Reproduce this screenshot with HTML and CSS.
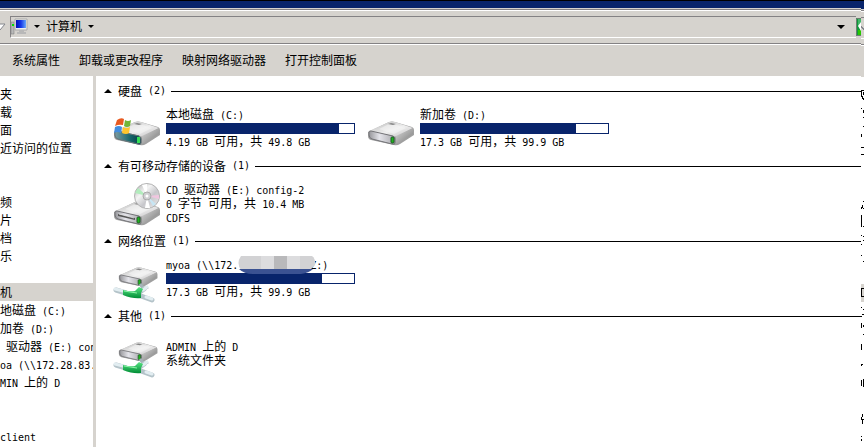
FILE: index.html
```html
<!DOCTYPE html>
<html lang="zh-CN">
<head>
<meta charset="utf-8">
<title>计算机</title>
<link rel="stylesheet" href="styles.css">
</head>
<body>
<svg class="defs" aria-hidden="true">
  <defs>
    <linearGradient id="top" x1="0" y1="0" x2="1" y2="1"><stop offset="0" stop-color="#b5b5b5"/><stop offset=".55" stop-color="#efefef"/><stop offset="1" stop-color="#c4c2c4"/></linearGradient>
    <linearGradient id="front" x1="0" y1="0" x2="1" y2="0"><stop offset="0" stop-color="#96969a"/><stop offset=".4" stop-color="#e4e4ea"/><stop offset="1" stop-color="#a8a8ac"/></linearGradient>
    <linearGradient id="side" x1="0" y1="0" x2="1" y2="1"><stop offset="0" stop-color="#dedede"/><stop offset="1" stop-color="#777"/></linearGradient>
    <linearGradient id="teal" x1="0" y1="0" x2="1" y2="0"><stop offset="0" stop-color="#7b9ba2"/><stop offset=".6" stop-color="#16656b"/><stop offset="1" stop-color="#073c42"/></linearGradient>
    <linearGradient id="disc" x1="0" y1="0" x2="1" y2="1"><stop offset="0" stop-color="#a7a7a7"/><stop offset=".35" stop-color="#f4f4f4"/><stop offset=".6" stop-color="#c7c7cb"/><stop offset="1" stop-color="#ececec"/></linearGradient>
    <linearGradient id="screen" x1="0" y1="0" x2="1" y2="0"><stop offset="0" stop-color="#0010b8"/><stop offset=".5" stop-color="#1638e8"/><stop offset="1" stop-color="#69a8fa"/></linearGradient>
    <linearGradient id="pipe" x1="0" y1="0" x2="0" y2="1"><stop offset="0" stop-color="#58e484"/><stop offset="1" stop-color="#008d35"/></linearGradient>
    <g id="drive">
      <path d="M1 11 22 1q3-1 6 0l17 5q2 1 2 3v5L33 23q-3 2-6 1L4 19q-3-1-3-4z" fill="#a0a0a0"/>
      <path d="M2 10 22 1q3-1 6 0l18 6-15 8q-2 1-5 0z" fill="url(#top)"/>
      <path d="M12 8 24 2l15 5-12 6z" fill="#f5f5f5" opacity=".55"/>
      <path d="m29 15 17-8v6L32 22l-4 1z" fill="url(#side)"/>
      <path d="M2 11q0-1 2-1l22 5q2 1 2 3v4q0 2-3 1L5 18q-3-1-3-4z" fill="url(#front)" stroke="#747478"/>
      <path d="m24 2 5 1-3 1-5-1z" fill="#858585"/>
      <rect x="24" y="16" width="3" height="6" rx="1" fill="#1db51d" stroke="#24582b"/>
    </g>
    <g id="netdrive">
      <use href="#drive" transform="translate(5 0) scale(.84 .8)"/>
      <path d="m27 17 4 5M27 24l8-4" stroke="#a3b2b8" stroke-width="3"/>
      <path d="m3 23 10 3M31 22l-7 5M28 29l11 4" stroke="#b4c3c9" stroke-width="5" stroke-linecap="round"/>
      <path d="m2 22 8 2M34 20l-4 3M33 30l6 2" stroke="#e2edf1" stroke-width="3" stroke-linecap="round"/>
      <path d="M10 23q8 2 12 1l4-4 4 2-2 4v5q-8 1-18-3z" fill="url(#pipe)"/>
      <path d="m11 24 13 2" stroke="#8bf5a7"/>
    </g>
  </defs>
</svg>

<div class="window">
  <div class="titlebar"></div>
  <header class="addressbar">
    <svg class="history" width="6" height="8" viewBox="0 0 6 8" aria-hidden="true"><path d="M-3 1h8L0 7z" fill="#fff" stroke="#84868c"/></svg>
    <div class="address">
      <svg width="17" height="18" viewBox="0 0 17 18" aria-hidden="true">
        <path d="M0 4h3v12H0z" fill="#b9b9b9" stroke="#777" stroke-width=".5"/><path d="M1 6h2v2H1z" fill="#00e000"/>
        <path d="M4 1h12v11H4z" fill="#eee" stroke="#aaa"/><path d="M5 2h10v8H5z" fill="url(#screen)"/>
        <path d="M8 12h5v2h2v2H6v-2h2z" fill="#b8b8b8"/>
      </svg>
      <button class="crumb-arrow" aria-label="位置"><i class="down"></i></button>
      <button class="crumb">计算机</button>
      <button class="crumb-arrow" aria-label="子文件夹"><i class="down"></i></button>
      <button class="crumb-arrow recent" aria-label="以前的位置"><i class="down large"></i></button>
    </div>
    <button class="refresh" aria-label="刷新"><svg width="5" height="18" viewBox="0 0 5 18"><rect width="5" height="18" fill="#10983a"/><path d="M2 1h3v7H2z" fill="#42b868"/><path d="M2 12h3v5H2z" fill="#28c800"/><path d="m2 8 3-4v9z" fill="#fff"/><path d="M.5 18V.5H5M.5 17.500H5" fill="none" stroke="#6b7d70"/></svg></button>
  </header>
  <nav class="toolbar">
    <button>系统属性</button>
    <button>卸载或更改程序</button>
    <button>映射网络驱动器</button>
    <button>打开控制面板</button>
  </nav>
  <div class="body">
    <nav class="tree">
      <div class="group">
        <a href="#">夹</a><a href="#">载</a><a href="#">面</a><a href="#">近访问的位置</a>
      </div>
      <div class="group">
        <a href="#">频</a><a href="#">片</a><a href="#">档</a><a href="#">乐</a>
      </div>
      <div class="group devices">
        <a href="#" class="selected">机</a>
        <a href="#">地磁盘<span class="m"> (C:)</span></a>
        <a href="#">加卷<span class="m"> (D:)</span></a>
        <a href="#"><span class="m"> </span>驱动器<span class="m"> (E:) con</span></a>
        <a href="#"><span class="m">oa (\\172.28.83.</span></a>
        <a href="#"><span class="m">MIN </span>上的<span class="m"> D</span></a>
      </div>
      <div class="group"><a href="#"><span class="m">client</span></a></div>
    </nav>
    <main class="content">
      <section>
        <h2><i class="up"></i>硬盘<span class="m"> (2)</span></h2>
        <div class="tiles">
          <article class="tile">
            <svg width="48" height="34" viewBox="0 0 48 34" aria-hidden="true">
              <use href="#drive" y="8"/>
              <path d="M2 19q0-1 2-1l22 5q2 1 2 3v4q0 2-3 1L5 26q-3-1-3-4z" fill="url(#teal)" stroke="#65777b"/>
              <rect x="24" y="24" width="3" height="6" fill="#35df55"/>
              <path d="M4 7q4-3 7-1l-1 6q-4-1-8 1z" fill="#e85a20"/><path d="M12 7q3 2 6 0l-1 6q-3 2-6 0z" fill="#72b637"/>
              <path d="M2 14q4-2 7 0l-1 6q-4-2-7 0z" fill="#438dde"/><path d="M10 14q3 2 7 0l-1 6q-3 2-7 0z" fill="#ffc52d"/>
            </svg>
            <div class="info"><div class="name">本地磁盘<span class="m"> (C:)</span></div><div class="bar"><div class="fill" style="width:92%"></div></div><div><span class="m">4.19 GB </span>可用，共<span class="m"> 49.8 GB</span></div></div>
          </article>
          <article class="tile">
            <svg width="48" height="34" viewBox="0 0 48 34" aria-hidden="true"><use href="#drive" y="8"/></svg>
            <div class="info"><div class="name">新加卷<span class="m"> (D:)</span></div><div class="bar"><div class="fill" style="width:83%"></div></div><div><span class="m">17.3 GB </span>可用，共<span class="m"> 99.9 GB</span></div></div>
          </article>
        </div>
      </section>
      <section>
        <h2><i class="up"></i>有可移动存储的设备<span class="m"> (1)</span></h2>
        <div class="tiles">
          <article class="tile">
            <svg width="48" height="44" viewBox="0 0 48 44" aria-hidden="true">
              <use href="#drive" y="18"/>
              <path d="m5 31 17 4v2L5 33z" fill="#555"/><path d="m6 31 15 4" stroke="#eee" stroke-width=".7"/>
              <circle cx="34" cy="13" r="12.500" fill="url(#disc)" stroke="#b3b3b3"/>
              <path d="M34 13 22 10l3-5z" fill="#b2ecbd"/><path d="m34 13 12-1v4z" fill="#f0c6df"/><path d="m34 13-5-11 5-1z" fill="#fff"/><path d="m34 13 3 12-5 0z" fill="#fff"/><path d="m34 13 9 8-3 2z" fill="#c8e6f4"/>
              <circle cx="34" cy="13" r="4" fill="#cfcfd2" stroke="#aaa"/><circle cx="34" cy="13" r="1.500" fill="#fff"/>
            </svg>
            <div class="info compact"><div><span class="m">CD </span>驱动器<span class="m"> (E:) config-2</span></div><div><span class="m">0 </span>字节<span class="m"> </span>可用，共<span class="m"> 10.4 MB</span></div><div><span class="m">CDFS</span></div></div>
          </article>
        </div>
      </section>
      <section>
        <h2><i class="up"></i>网络位置<span class="m"> (1)</span></h2>
        <div class="tiles">
          <article class="tile network">
            <svg width="48" height="36" viewBox="0 0 48 36" aria-hidden="true"><use href="#netdrive"/></svg>
            <div class="info"><div class="name masked"><span class="m">myoa (\\172.</span><span class="mask-space"></span><span class="m">Z:)</span>
              <svg class="mask" width="80" height="20" viewBox="0 0 80 20" aria-hidden="true"><path d="M4 1h71q4 3 3 9l-5 5H4q-5-7 0-14z" fill="#d2d2d4"/><path d="M24 1h13v13H24zM50 1h13v13H50z" fill="#dcdcde"/><path d="M37 1h13v13H37z" fill="#b9b9bb"/><path d="M2 14h74q-4 4-12 5H16q-9 0-14-5z" fill="#3b5292"/></svg>
            </div><div class="bar"><div class="fill" style="width:83%"></div></div><div><span class="m">17.3 GB </span>可用，共<span class="m"> 99.9 GB</span></div></div>
          </article>
        </div>
      </section>
      <section>
        <h2><i class="up"></i>其他<span class="m"> (1)</span></h2>
        <div class="tiles">
          <article class="tile network">
            <svg width="48" height="36" viewBox="0 0 48 36" aria-hidden="true"><use href="#netdrive"/></svg>
            <div class="info compact"><div><span class="m">ADMIN </span>上的<span class="m"> D</span></div><div>系统文件夹</div></div>
          </article>
        </div>
      </section>
    </main>
  </div>
</div>
<aside class="edge" aria-hidden="true">
  <svg width="3" height="447" viewBox="0 0 3 447" shape-rendering="crispEdges">
    <path d="M0 0h3v77H0z" fill="#d6d3ce"/><path d="M0 0h3v1H0z"/><path d="M0 1h3v8H0z" fill="#08246b"/>
    <path d="M0 10h3v1H0zM0 17h3v1H0zM0 44h3v1H0z" fill="#848284"/><path d="M0 11h3v1H0zM0 38h3v1H0zM0 45h3v1H0z" fill="#fff"/>
    <path d="m0 26 3 4" stroke="#84868c" fill="none"/>
    <path d="M0 284h3v18H0z" fill="#d6d3ce"/>
    <path d="M0 90h3v1H0zM0 91h1v6H0zM2 92h1v3H2zM1 96h1v3H1zM2 98h1v2H2zM0 108h1v1H0zM2 110h1v3H2zM2 117h1v1H2zM2 126h1v1H2zM0 134h1v3H0zM0 147h3v1H0zM0 154h3v1H0zM2 201h1v1H2zM1 205h1v3H1zM0 207h1v2H0zM2 208h1v1H2zM0 215h1v12H0zM2 226h1v1H2zM0 235h1v1H0zM2 236h1v1H2zM2 240h1v1H2zM0 244h1v1H0zM0 255h1v1H0zM2 261h1v1H2zM0 288h3v1H0zM0 289h1v8H0zM1 296h2v1H1zM0 307h1v1H0zM2 309h1v1H2zM1 314h2v1H1zM0 316h1v1H0zM0 323h1v5H0zM2 325h1v2H2zM2 334h1v1H2zM0 344h1v6H0zM0 364h2v1H0zM0 365h1v1H0zM0 380h1v6H0zM2 379h1v8H2zM1 414h1v3H1zM0 417h1v2H0zM0 419h3v1H0zM1 420h1v4H1zM0 436h1v1H0zM0 439h1v2H0z"/>
  </svg>
</aside>
</body>
</html>
```

FILE: styles.css
```css
* { box-sizing: border-box; }
body {
  margin: 0;
  min-height: 100vh;
  display: flex;
  overflow: hidden;
  background: #fff;
  color: #000;
  font: 12px/14px "Noto Sans CJK SC", sans-serif;
}
.defs { position: absolute; width: 0; height: 0; }
.m { font-family: "DejaVu Sans Mono", monospace; font-size: 10px; line-height: 1; white-space: pre; }
svg { display: block; flex: none; }
button { margin: 0; padding: 0; border: 0; background: none; color: inherit; font: inherit; white-space: nowrap; }
a { color: inherit; text-decoration: none; }

.window { flex: 1; min-width: 0; display: flex; flex-direction: column; }
.edge { flex: none; width: 3px; }
.titlebar { height: 10px; background: #08246b; border-top: 1px solid #000; border-bottom: 2px solid #d6d3ce; }
.addressbar {
  display: flex;
  align-items: center;
  height: 35px;
  padding-bottom: 2px;
  background: #d6d3ce;
  border-top: 1px solid #fff;
  border-bottom: 1px solid #fff;
  box-shadow: inset 0 -1px #848284, 0 -1px #848284;
}
.history { margin-right: 4px; }
.address {
  flex: 1;
  display: flex;
  align-items: center;
  height: 22px;
  border: 1px solid #848284;
  border-right: 0;
  border-bottom-color: #fff;
}
.crumb { padding-bottom: 2px; }
.crumb-arrow { display: flex; align-items: center; justify-content: center; width: 18px; height: 18px; }
.recent { margin-left: auto; margin-right: 6px; }
.down { border: 3px solid transparent; border-top-color: #000; border-bottom: 0; }
.down.large { border-width: 4px 4px 0; }
.toolbar { display: flex; gap: 19px; height: 31px; padding: 0 12px 2px; background: #d6d3ce; }

.body { flex: 1; display: flex; min-height: 0; }
.tree {
  flex: none;
  width: 96px;
  padding-top: 9px;
  border-right: 3px solid #d6d3ce;
  overflow: hidden;
  display: flex;
  flex-direction: column;
  gap: 36px;
}
.tree a { display: block; height: 18px; line-height: 18px; white-space: nowrap; overflow: hidden; }
.tree .devices { margin-top: -18px; }
.tree .selected { background: #d6d3ce; }

.content { flex: 1; min-width: 0; padding: 6px 0 0 8px; }
section { height: 75px; }
h2 { display: flex; align-items: center; height: 18px; margin: 0; font: inherit; line-height: 14px; white-space: nowrap; }
h2::after { content: ""; flex: 1; height: 1px; margin-left: 5px; background: #000; }
.up { margin-right: 6px; border: 4px solid transparent; border-bottom-color: #000; border-top: 0; }
.tiles { display: flex; gap: 12px; padding-left: 9px; }
.tile { display: flex; align-items: center; gap: 5px; width: 242px; height: 55px; }
.tile > svg { margin-top: 5px; }
.tile.network > svg { margin-top: 15px; }
.info { width: 190px; white-space: nowrap; }
.name { margin-bottom: 2px; }
.compact { line-height: 13px; }
.bar { height: 11px; border: 1px solid #08246b; }
.fill { height: 100%; background: #08246b; }
.masked { position: relative; }
.mask-space { display: inline-block; width: 72px; }
.mask { position: absolute; left: 71px; top: -2px; }
```
